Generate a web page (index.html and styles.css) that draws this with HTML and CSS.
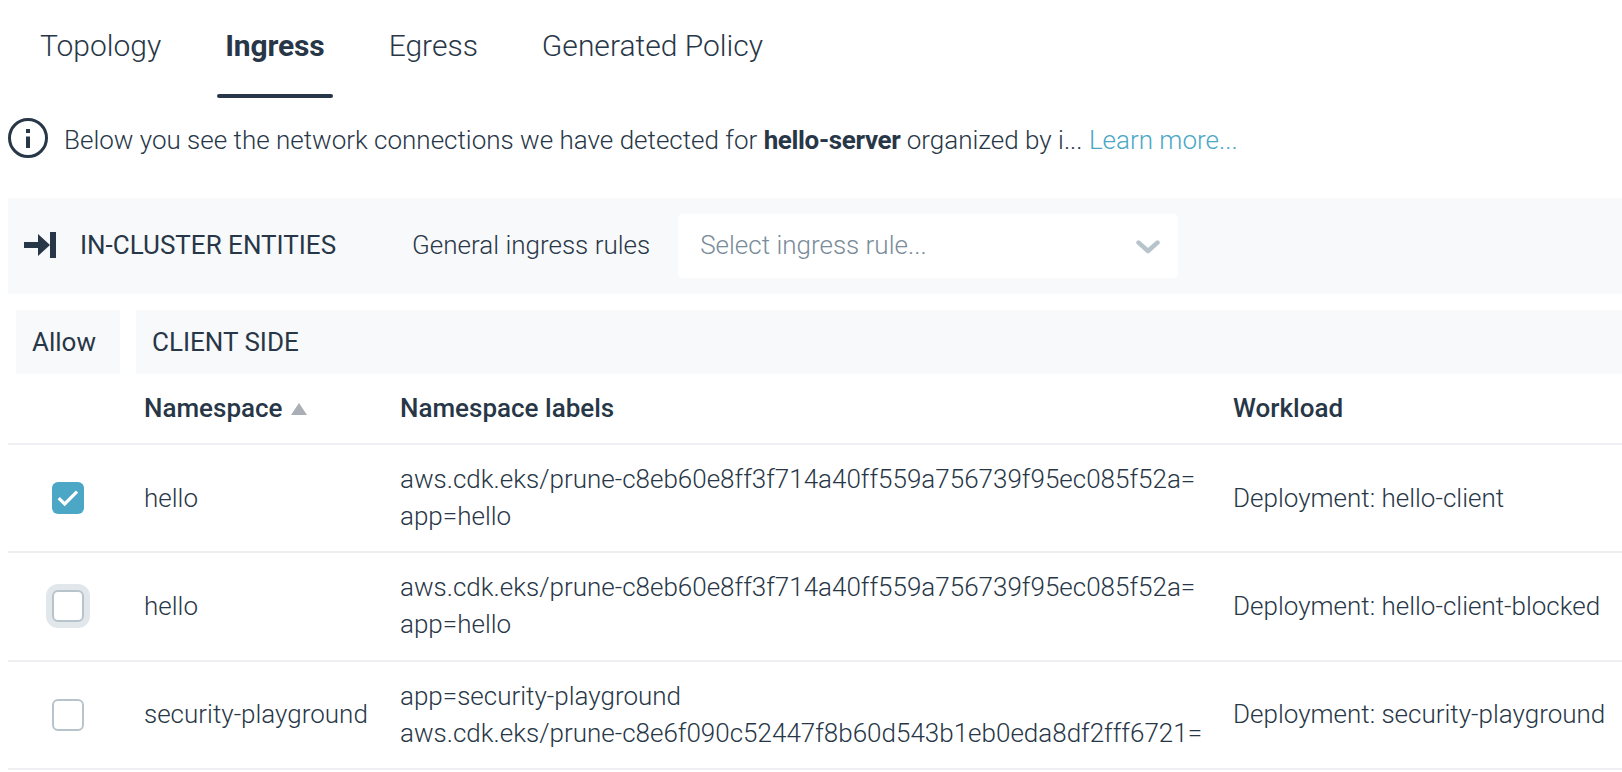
FILE: index.html
```html
<!DOCTYPE html>
<html lang="en">
<head>
<meta charset="utf-8">
<title>Network policy - Ingress</title>
<link rel="stylesheet" href="styles.css">
</head>
<body>
<nav class="tabs">
  <a class="tab">Topology</a>
  <a class="tab tab-active">Ingress</a>
  <a class="tab">Egress</a>
  <a class="tab">Generated Policy</a>
</nav>
<div class="info">
  <svg class="info-icon" width="40" height="40" viewBox="0 0 40 40"><circle cx="20" cy="20" r="18.5" fill="none" stroke="#283747" stroke-width="3"/><path d="M18 11h4v4h-4zM18 18.5h4V30h-4z" fill="#283747"/></svg>
  <p class="info-text">Below you see the network connections we have detected for <b>hello-server</b> organized by i... <a class="link">Learn more...</a></p>
</div>
<section class="toolbar">
  <svg class="toolbar-icon" width="32" height="26" viewBox="0 0 32 26"><path d="M0 10h14V2l12 11-12 11v-8H0zM26 0h6v26h-6z" fill="#283747"/></svg>
  <h2 class="toolbar-title">IN-CLUSTER ENTITIES</h2>
  <span class="toolbar-label">General ingress rules</span>
  <div class="select">
    <span class="select-text">Select ingress rule...</span>
    <svg class="select-arrow" width="24" height="14" viewBox="0 0 24 14"><path d="M2.6 2.6L12 11l9.4-8.4" fill="none" stroke="#b8c4cc" stroke-width="4.6" stroke-linecap="round" stroke-linejoin="round"/></svg>
  </div>
</section>
<div class="groups">
  <div class="group">Allow</div>
  <div class="group">CLIENT SIDE</div>
</div>
<div class="row head">
  <div></div>
  <div class="sorted">Namespace <svg width="16" height="12" viewBox="0 0 16 12"><path d="M8 0l8 12H0z" fill="#a9afb5"/></svg></div>
  <div>Namespace labels</div>
  <div>Workload</div>
</div>
<div class="row">
  <span class="check check-on"><svg width="32" height="32" viewBox="0 0 32 32"><path d="M6.7 16.2l6 5.8L25 9.6" fill="none" stroke="#fff" stroke-width="3.2"/></svg></span>
  <div>hello</div>
  <div>aws.cdk.eks/prune-c8eb60e8ff3f714a40ff559a756739f95ec085f52a=<br>app=hello</div>
  <div>Deployment: hello-client</div>
</div>
<div class="row">
  <span class="check check-focus"></span>
  <div>hello</div>
  <div>aws.cdk.eks/prune-c8eb60e8ff3f714a40ff559a756739f95ec085f52a=<br>app=hello</div>
  <div>Deployment: hello-client-blocked</div>
</div>
<div class="row">
  <span class="check"></span>
  <div>security-playground</div>
  <div>app=security-playground<br>aws.cdk.eks/prune-c8e6f090c52447f8b60d543b1eb0eda8df2fff6721=</div>
  <div>Deployment: security-playground</div>
</div>
</body>
</html>
```
FILE: styles.css
```css
* { box-sizing: border-box; }
body {
  margin: 0;
  padding-left: 8px;
  height: 772px;
  overflow: hidden;
  background: #fff;
  color: #283747;
  font: 300 26px/37.14px Roboto, sans-serif;
  white-space: nowrap;
}
.tabs {
  display: flex;
  gap: 48px;
  height: 98px;
  padding-left: 24px;
  font-size: 30px;
  line-height: 92px;
}
.tab { padding: 0 8px; border-bottom: 4px solid transparent; position: relative; }
.tab-active { font-weight: 700; letter-spacing: -0.15px; }
.tab-active::after {
  content: "";
  position: absolute;
  left: 0;
  right: 0;
  bottom: -4px;
  height: 4px;
  border-radius: 2px;
  background: #283747;
}
.info { display: flex; height: 100px; padding-top: 20px; gap: 16px; }
.info-text { margin: 4px 0 0; }
.info-text b { font-weight: 700; letter-spacing: -0.35px; }
.link { color: #4ba7c5; }
.toolbar {
  display: flex;
  align-items: center;
  height: 96px;
  padding-left: 16px;
  background: #f8f9fb;
}
.toolbar-icon { margin-bottom: 2px; }
.toolbar-title { margin: 0 76px 1px 24px; font-size: 26px; font-weight: 400; }
.toolbar-label { margin: 0 28px 1px 0; }
.select {
  display: flex;
  align-items: center;
  justify-content: space-between;
  width: 500px;
  height: 64px;
  padding: 0 18px 0 22px;
  border-radius: 5px;
  background: #fff;
  color: #7a8b99;
}
.select-text { margin-bottom: 1px; }
.select-arrow { margin-top: 2px; }
.groups {
  display: grid;
  grid-template-columns: 104px 1fr;
  gap: 16px;
  margin: 16px 0 0 8px;
  font-weight: 400;
}
.group { height: 64px; padding-left: 16px; line-height: 64px; background: #f8f9fb; }
.row {
  display: grid;
  grid-template-columns: 136px 256px 833px 1fr;
  align-items: center;
  height: 108.3px;
  border-bottom: 2px solid #eeeff3;
}
.head { height: 71px; font-weight: 500; }
.sorted { display: flex; align-items: center; gap: 8px; }
.sorted svg { margin-top: 1px; }
.check {
  width: 32px;
  height: 32px;
  margin-left: 44px;
  border: 2px solid #b8c4cc;
  border-radius: 6px;
  background: #fff;
}
.check-on { border: 0; background: #4ba7c5; }
.check-on svg { display: block; }
.check-focus { box-shadow: 0 0 0 6px #e2e7eb; }
```
